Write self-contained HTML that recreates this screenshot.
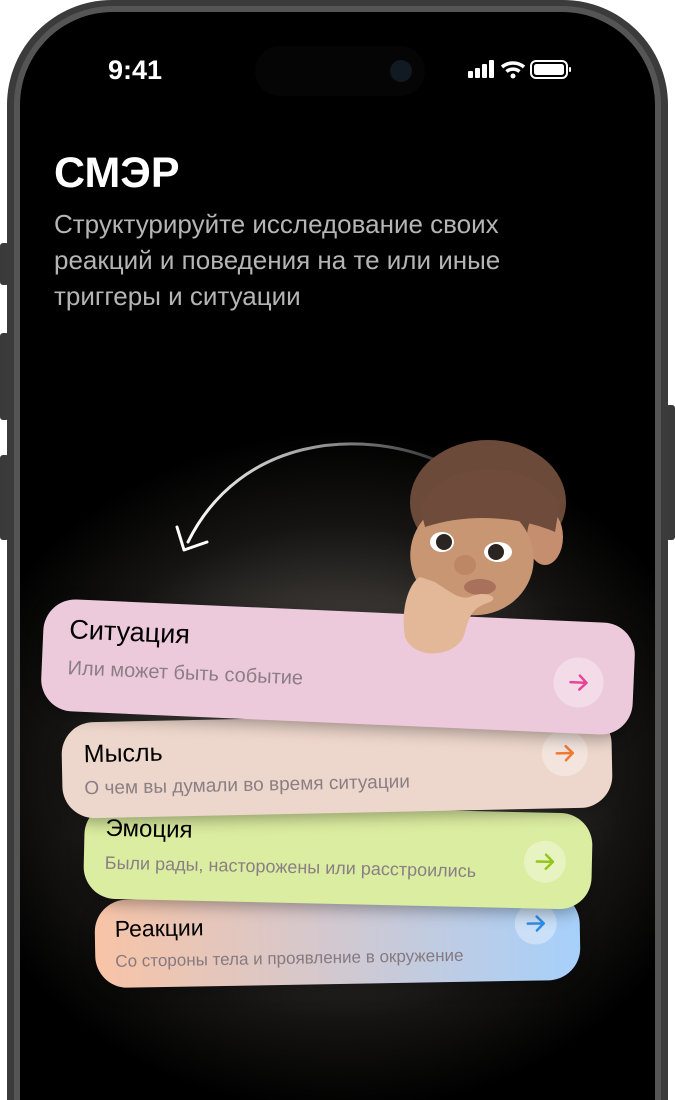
<!DOCTYPE html>
<html><head><meta charset="utf-8"><style>
*{margin:0;padding:0;box-sizing:border-box}
html,body{width:675px;height:1100px;overflow:hidden}
body{background:#fff;position:relative;font-family:"Liberation Sans",sans-serif}
.btn{position:absolute;background:#3a3a3a;border-radius:3px}
.frame{position:absolute;left:7px;top:0;width:661px;height:1100px;border-radius:105px 105px 0 0;background:#3b3b3b;}
.frame2{position:absolute;left:14px;top:6px;width:647px;height:1094px;border-radius:99px 99px 0 0;background:#555;}
.screen{position:absolute;left:20px;top:12px;width:635px;height:1088px;border-radius:93px 93px 0 0;background:#000;overflow:hidden}
.glow{position:absolute;left:-140px;top:360px;width:920px;height:800px;background:radial-gradient(ellipse 50% 50% at 50% 50%,rgba(100,95,90,1) 0%,rgba(72,68,64,.92) 35%,rgba(35,33,31,.6) 62%,rgba(0,0,0,0) 85%)}
.t{position:absolute;color:#fff}
.card{position:absolute;border-radius:32px;box-shadow:0 4px 16px rgba(0,0,0,.35)}
.card h3{position:absolute;font-weight:normal;color:#000}
.card p{position:absolute;color:#8a7f84}
.circ{position:absolute;width:50px;height:50px;border-radius:50%;background:rgba(255,255,255,.35)}
.circ svg{position:absolute;left:13px;top:13px}
</style></head><body>
<div class="btn" style="left:0;top:243px;width:9px;height:42px"></div>
<div class="btn" style="left:0;top:333px;width:9px;height:87px"></div>
<div class="btn" style="left:0;top:455px;width:9px;height:85px"></div>
<div class="btn" style="left:666px;top:405px;width:9px;height:135px"></div>
<div class="frame"></div><div class="frame2"></div>
<div class="screen">
<div class="glow"></div>
<div class="t" style="left:88px;top:43px;font-size:27px;font-weight:bold">9:41</div>
<div style="position:absolute;left:235px;top:34px;width:170px;height:50px;border-radius:25px;background:#050505"></div>
<div style="position:absolute;left:370px;top:48px;width:22px;height:22px;border-radius:50%;background:#111a22"></div>
<svg style="position:absolute;left:448px;top:46px" width="150" height="24">
<rect x="0" y="13" width="5" height="7" rx="1" fill="#fff"/><rect x="7" y="10" width="5" height="10" rx="1" fill="#fff"/><rect x="14" y="6" width="5" height="14" rx="1" fill="#fff"/><rect x="21" y="2" width="5" height="18" rx="1" fill="#fff"/>
<path d="M34 9 A17 17 0 0 1 56 9" stroke="#fff" stroke-width="3.5" fill="none"/><path d="M38.5 13.5 A10 10 0 0 1 51.5 13.5" stroke="#fff" stroke-width="3.5" fill="none"/><circle cx="45" cy="18" r="2.5" fill="#fff"/>
<rect x="63" y="3" width="36" height="17" rx="5" stroke="#fff" stroke-width="2" fill="none"/><rect x="66" y="6" width="30" height="11" rx="2.5" fill="#fff"/><rect x="101" y="9" width="2" height="5" rx="1" fill="#fff"/>
</svg>
<div class="t" style="left:34px;top:137px;font-size:43px;font-weight:bold">СМЭР</div>
<div class="t" style="left:34px;top:194px;font-size:26px;line-height:36px;color:#b5b5b5;width:500px">Структурируйте исследование своих реакций и поведения на те или иные триггеры и ситуации</div>
<svg style="position:absolute;left:0;top:0" width="635" height="700">
<defs><linearGradient id="ag" x1="0" y1="0" x2="1" y2="0"><stop offset="0" stop-color="#fff"/><stop offset="1" stop-color="#fff" stop-opacity=".2"/></linearGradient></defs>
<path d="M420 450 C340 415 220 425 168 530" stroke="url(#ag)" stroke-width="3" fill="none" stroke-linecap="round"/>
<path d="M157 515 L164 538 L187 530" stroke="#fff" stroke-width="3" fill="none" stroke-linecap="round" stroke-linejoin="round"/>
</svg>
<div class="card" style="left:75px;top:884px;width:485px;height:88px;transform:rotate(-1deg);background:linear-gradient(90deg,#f8c4a6,#d6c8cc 45%,#a6d0fb)">
<h3 style="left:20px;top:16px;font-size:23px">Реакции</h3><p style="left:20px;top:52px;color:#857a80;font-size:17px">Со стороны тела и проявление в окружение</p>
<div class="circ" style="left:420px;top:10px;width:42px;height:42px"><svg style="left:9px;top:9px" width="24" height="24"><path d="M4 12H20M13 5L20 12L13 19" stroke="#2f8de6" stroke-width="2.5" fill="none" stroke-linecap="round" stroke-linejoin="round"/></svg></div></div>
<div class="card" style="left:64px;top:796px;width:508px;height:96px;transform:rotate(1.3deg);background:#dbeda0">
<h3 style="left:21px;top:12px;font-size:24px">Эмоция</h3><p style="left:21px;top:50px;font-size:18px">Были рады, насторожены или расстроились</p>
<div class="circ" style="left:440px;top:28px;width:42px;height:42px"><svg style="left:9px;top:9px" width="24" height="24"><path d="M4 12H20M13 5L20 12L13 19" stroke="#94c51a" stroke-width="2.5" fill="none" stroke-linecap="round" stroke-linejoin="round"/></svg></div></div>
<div class="card" style="left:42px;top:705px;width:550px;height:96px;transform:rotate(-1.2deg);background:#edd6cb">
<h3 style="left:22px;top:18px;font-size:25px">Мысль</h3><p style="left:22px;top:56px;font-size:19px">О чем вы думали во время ситуации</p>
<div class="circ" style="left:480px;top:18px;width:46px;height:46px"><svg style="left:11px;top:11px" width="24" height="24"><path d="M4 12H20M13 5L20 12L13 19" stroke="#f07a36" stroke-width="2.5" fill="none" stroke-linecap="round" stroke-linejoin="round"/></svg></div></div>
<div class="card" style="left:22px;top:599px;width:592px;height:112px;transform:rotate(2.5deg);background:#edc9dc">
<h3 style="left:26px;top:15px;font-size:27px">Ситуация</h3><p style="left:26px;top:58px;font-size:20px">Или может быть событие</p>
<div class="circ" style="left:512px;top:36px"><svg width="24" height="24"><path d="M4 12H20M13 5L20 12L13 19" stroke="#e8449a" stroke-width="2.5" fill="none" stroke-linecap="round" stroke-linejoin="round"/></svg></div></div>
<svg style="position:absolute;left:360px;top:420px" width="200" height="230">
<ellipse cx="108" cy="70" rx="78" ry="62" fill="#6b4a3a"/>
<ellipse cx="165" cy="105" rx="18" ry="28" fill="#c58e6e"/>
<ellipse cx="92" cy="125" rx="62" ry="58" fill="#c99673" transform="rotate(15 92 125)"/>
<path d="M40 75 C60 30 140 20 180 70 L175 100 C140 85 90 80 45 95 Z" fill="#6e4b3b"/>
<ellipse cx="62" cy="110" rx="12" ry="10" fill="#fff"/><circle cx="64" cy="110" r="8" fill="#2a2520"/>
<ellipse cx="118" cy="120" rx="14" ry="10" fill="#fff"/><circle cx="116" cy="120" r="8" fill="#2a2520"/>
<ellipse cx="85" cy="133" rx="11" ry="10" fill="#bd8665"/>
<ellipse cx="100" cy="155" rx="16" ry="8" fill="#a9705c"/>
<path d="M40 145 C30 150 20 175 25 205 C35 230 80 225 85 200 C90 180 95 175 110 170 C120 165 105 158 90 165 C80 168 70 160 55 150 Z" fill="#e3b898"/>
</svg>
</div>
</body></html>
